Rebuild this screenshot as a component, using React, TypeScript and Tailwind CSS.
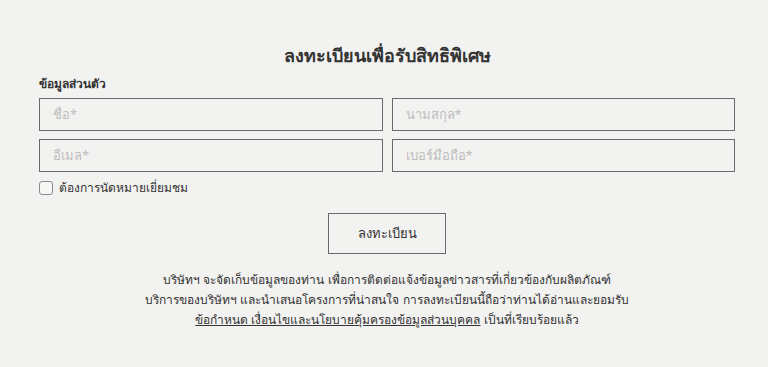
const Field = ({ placeholder }: { placeholder: string }) => {
  return (
    <div className="h-[33px] border border-[#6b6b6b] bg-[#f2f2f0] flex items-center px-[13px]">
      <span className="text-[13px] text-[#bdbdbd]">{placeholder}</span>
    </div>
  );
};

const App = () => {
  return (
    <section
      className="w-full h-[367px] bg-[#f2f2f0] text-[#333]"
      style={{ fontFamily: '"Noto Sans", "DejaVu Sans", sans-serif' }}
    >
      <div className="pl-[39px] pr-[33px] pt-[42px]">
        {/* Heading */}
        <h2 className="text-center text-[18px] font-bold leading-[26px] text-[#333]">
          ลงทะเบียนเพื่อรับสิทธิพิเศษ
        </h2>

        <div className="mt-[8px] text-[12px] font-bold leading-[16px] text-[#333]">
          ข้อมูลส่วนตัว
        </div>

        {/* Inputs */}
        <div className="mt-[6px] grid grid-cols-2 gap-x-[9px] gap-y-[8px]">
          <Field placeholder="ชื่อ*" />
          <Field placeholder="นามสกุล*" />
          <Field placeholder="อีเมล*" />
          <Field placeholder="เบอร์มือถือ*" />
        </div>

        {/* Checkbox */}
        <label className="mt-[7px] flex items-center gap-[6px]">
          <span className="w-[14px] h-[14px] rounded-[3px] border border-[#8a8a8a] bg-[#f7f7f6]"></span>
          <span className="text-[12px] text-[#333]">ต้องการนัดหมายเยี่ยมชม</span>
        </label>

        {/* Button */}
        <div className="mt-[16px] flex justify-center">
          <button className="w-[118px] h-[41px] border border-[#6b6b6b] bg-[#f2f2f0] text-[13px] text-[#333]">
            ลงทะเบียน
          </button>
        </div>

        {/* Consent */}
        <p className="mt-[16px] text-center text-[12px] leading-[20px] text-[#333]">
          บริษัทฯ จะจัดเก็บข้อมูลของท่าน เพื่อการติดต่อแจ้งข้อมูลข่าวสารที่เกี่ยวข้องกับผลิตภัณฑ์
          <br />
          บริการของบริษัทฯ และนำเสนอโครงการที่น่าสนใจ การลงทะเบียนนี้ถือว่าท่านได้อ่านและยอมรับ
          <br />
          <a className="underline">ข้อกำหนด เงื่อนไขและนโยบายคุ้มครองข้อมูลส่วนบุคคล</a> เป็นที่เรียบร้อยแล้ว
        </p>
      </div>
    </section>
  );
};

export default App;
